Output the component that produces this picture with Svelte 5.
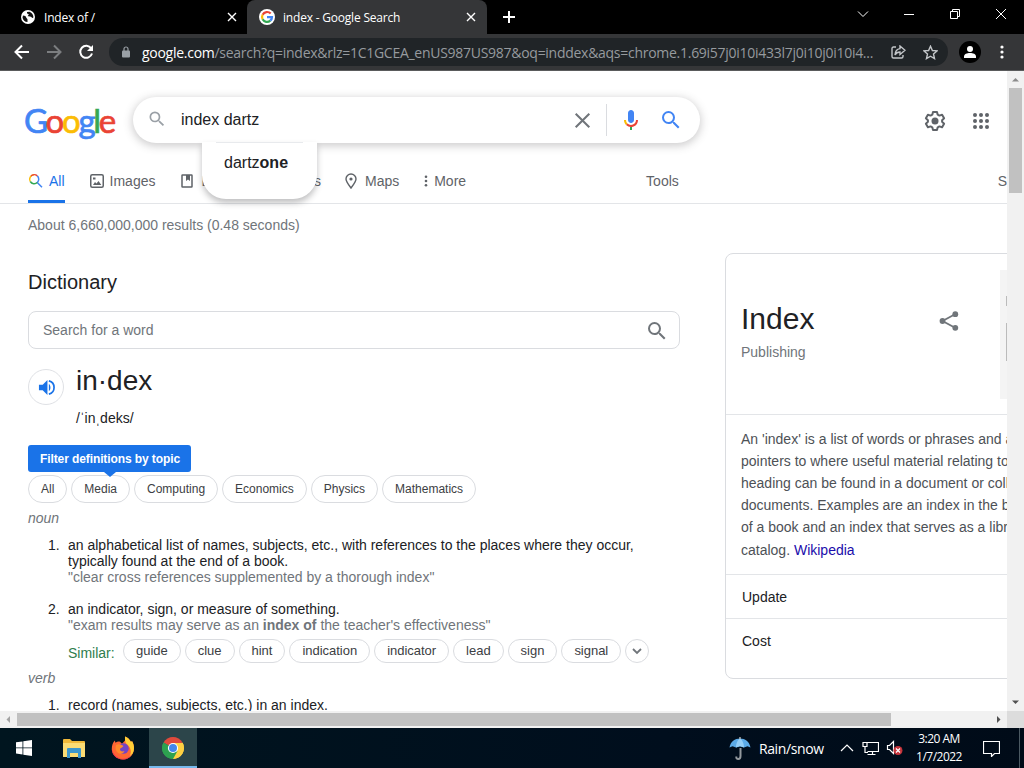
<script>
    let query = $state("index dartz");
    let word = $state("");

    const topics = [
        "All",
        "Media",
        "Computing",
        "Economics",
        "Physics",
        "Mathematics",
    ];
    const similar = [
        "guide",
        "clue",
        "hint",
        "indication",
        "indicator",
        "lead",
        "sign",
        "signal",
    ];
    const summary = [
        "An 'index' is a list of words or phrases and associated",
        "pointers to where useful material relating to that",
        "heading can be found in a document or collection of",
        "documents. Examples are an index in the back matter",
        "of a book and an index that serves as a library",
    ];
    const dots = [3, 9, 15];
</script>

{#snippet magnifier(size)}
    <svg width={size} height={size} viewBox="0 0 24 24" fill="currentColor">
        <path
            d="M15.5 14h-.79l-.28-.27A6.47 6.47 0 0 0 16 9.5 6.5 6.5 0 1 0 9.5 16c1.61 0 3.09-.59 4.23-1.57l.27.28v.79l5 4.99L20.49 19l-4.99-5zm-6 0C7.01 14 5 11.99 5 9.5S7.01 5 9.5 5 14 7.01 14 9.5 11.99 14 9.5 14z"
        />
    </svg>
{/snippet}

{#snippet cross(size, width)}
    <svg width={size} height={size} viewBox="0 0 10 10">
        <path
            d="M1 1l8 8M9 1l-8 8"
            stroke="currentColor"
            stroke-width={width}
        />
    </svg>
{/snippet}

<div class="desktop">
    <div class="tabstrip">
        <div class="tab">
            <svg width="14" height="14" viewBox="0 0 14 14">
                <circle cx="7" cy="7" r="7" fill="#fff" />
                <path
                    d="M2 5.5c2 .2 3 .8 3.2 2 .2 1 1.300 1 1.300 2v2.600C4 12 1.800 10 1.500 7.500zM6 2c-.2 1.500.5 2 1.600 2 .5 1.200-1 1.300-.8 2.300 1.500.3 3-.2 3.800 1 .3.800 1 1 1.800.3C12.500 5 11 2.500 8.500 1.700z"
                    fill="#111"
                />
            </svg>
            <span class="tab-title first-title">Index of /</span>
            <button class="tab-close" aria-label="Close tab"
                >{@render cross(10, 1.4)}</button
            >
        </div>
        <div class="tab active">
            <svg width="16" height="16" viewBox="0 0 16 16">
                <circle cx="8" cy="8" r="8" fill="#fff" />
                <g fill="none" stroke-width="2.200">
                    <path d="M11.700 4.600A5 5 0 0 0 3.600 5.700" stroke="#ea4335" />
                    <path d="M3.600 5.700a5 5 0 0 0 0 4.600" stroke="#fbbc05" />
                    <path d="M3.600 10.300a5 5 0 0 0 7.700 1.400" stroke="#34a853" />
                    <path d="M11.300 11.700A5 5 0 0 0 13 8.100H8" stroke="#4285f4" />
                </g>
            </svg>
            <span class="tab-title">index - Google Search</span>
            <button class="tab-close" aria-label="Close tab"
                >{@render cross(10, 1.4)}</button
            >
        </div>
        <button class="new-tab" aria-label="New tab">
            <svg width="12" height="12" viewBox="0 0 12 12"
                ><path d="M6 0v12M0 6h12" stroke="#fff" stroke-width="2" /></svg
            >
        </button>
        <div class="window-buttons">
            <svg width="46" height="28" viewBox="0 0 46 28"
                ><path d="M18 11.500l5 5 5-5" /></svg
            >
            <svg width="46" height="28" viewBox="0 0 46 28"
                ><path d="M18 14.500h10" /></svg
            >
            <svg width="46" height="28" viewBox="0 0 46 28"
                ><path d="M18.500 11.500h7v7h-7zM20.500 11.500v-2h7v7h-2" /></svg
            >
            <svg width="46" height="28" viewBox="0 0 46 28"
                ><path d="M18 9l10 10M28 9l-10 10" /></svg
            >
        </div>
    </div>

    <div class="toolbar">
        <svg class="nav" width="16" height="16" viewBox="0 0 16 16"
            ><path d="M15 8H2M8 1.500L1.500 8 8 14.500" stroke="#fff" /></svg
        >
        <svg class="nav" width="16" height="16" viewBox="0 0 16 16"
            ><path d="M1 8h13M8 1.500L14.500 8 8 14.500" stroke="#7c7e80" /></svg
        >
        <svg class="nav" width="16" height="16" viewBox="0 0 16 16">
            <path d="M13.200 4.400A6 6 0 1 0 14 9.500" stroke="#fff" />
            <path d="M15 1v6H9z" fill="#fff" />
        </svg>
        <div class="omnibox">
            <svg width="8" height="12" viewBox="0 0 8 12">
                <rect y="4.500" width="8" height="7" rx="1" fill="#9aa0a6" />
                <path
                    d="M2 5V3a2 2 0 0 1 4 0v2"
                    fill="none"
                    stroke="#9aa0a6"
                    stroke-width="1.200"
                />
            </svg>
            <span class="url"
                ><b>google.com</b
                >/search?q=index&amp;rlz=1C1GCEA_enUS987US987&amp;oq=inddex&amp;aqs=chrome.1.69i57j0i10i433l7j0i10j0i10i4...</span
            >
            <svg
                class="omni-icon"
                width="15"
                height="14"
                viewBox="0 0 15 14"
            >
                <path d="M5 2H2.500Q1 2 1 3.500v8Q1 13 2.500 13h8q1.500 0 1.500-1.500V10" />
                <path d="M9 1l5 4.300L9 9.500V7C6.500 7 5 8 4 10c.2-3.500 2-6 5-6.400z" />
            </svg>
            <svg
                class="omni-icon"
                width="15"
                height="15"
                viewBox="0 0 15 15"
                ><path
                    d="M7.500 1.200l1.900 4.300 4.600.4-3.500 3.100 1 4.600-4-2.400-4 2.400 1-4.600L1 5.900l4.600-.4z"
                /></svg
            >
        </div>
        <div class="avatar">
            <svg width="12" height="12" viewBox="0 0 12 12" fill="#fff"
                ><circle cx="6" cy="3" r="3" /><path
                    d="M0 12v-1.500C0 8 3 7 6 7s6 1 6 3.500V12z"
                /></svg
            >
        </div>
        <svg class="kebab" width="4" height="14" viewBox="0 0 4 14" fill="#fff">
            <circle cx="2" cy="2" r="1.600" /><circle cx="2" cy="7" r="1.600" />
            <circle cx="2" cy="12" r="1.600" />
        </svg>
    </div>

    <div class="viewport">
        <main class="page">
            <header class="search-header">
                <div class="logo">
                    <span class="blue">G</span><span class="red">o</span><span
                        class="yellow">o</span
                    ><span class="blue">g</span><span class="green">l</span><span
                        class="red">e</span
                    >
                </div>
                <div class="searchbox">
                    <span class="lens">{@render magnifier(20)}</span>
                    <input
                        type="text"
                        aria-label="Search"
                        bind:value={query}
                    />
                    <span class="clear">{@render cross(17, 1.2)}</span>
                    <span class="separator"></span>
                    <svg class="mic" width="24" height="24" viewBox="0 0 24 24">
                        <path
                            d="M12 15c1.660 0 3-1.310 3-2.970V5c0-1.660-1.340-3-3-3S9 3.340 9 5v7.030C9 13.690 10.340 15 12 15z"
                            fill="#4285f4"
                        />
                        <path d="M11 18.900h2V22h-2z" fill="#34a853" />
                        <path
                            d="M7 12H5c0 1.930.78 3.680 2.040 4.950l1.410-1.410A5 5 0 0 1 7 12z"
                            fill="#fbbc05"
                        />
                        <path
                            d="M12 17c-1.380 0-2.640-.56-3.540-1.470l-1.410 1.410A7 7 0 0 0 19 12h-2a5 5 0 0 1-5 5z"
                            fill="#ea4335"
                        />
                    </svg>
                    <span class="go">{@render magnifier(24)}</span>
                    <div class="suggestions">
                        <div class="suggestion">dartz<b>one</b></div>
                    </div>
                </div>
                <svg class="gear" width="22" height="22" viewBox="1 1 22 22">
                    <path
                        d="M10 3h4l.7 2.700 1.700.9 2.700-.8 2 3.500-2 1.900v1.600l2 1.900-2 3.500-2.700-.8-1.700.9L14 21h-4l-.7-2.700-1.700-.9-2.700.8-2-3.500 2-1.900v-1.600l-2-1.900 2-3.500 2.700.8 1.700-.9z"
                        fill="none"
                        stroke="#5f6368"
                        stroke-width="2"
                        stroke-linejoin="round"
                    />
                    <circle cx="12" cy="12" r="3.500" fill="#5f6368" />
                </svg>
                <svg width="18" height="18" viewBox="0 0 18 18" fill="#5f6368">
                    {#each dots as cy}
                        {#each dots as cx}
                            <circle {cx} {cy} r="2" />
                        {/each}
                    {/each}
                </svg>
            </header>

            <nav class="modes">
                <span class="mode selected">
                    <svg width="16" height="16" viewBox="0 0 16 16" fill="none">
                        <path d="M2.200 8.500A4.500 4.500 0 0 1 6 1.800" stroke="#fbbc05" stroke-width="1.500" />
                        <path d="M3 3a4.500 4.500 0 0 1 6.300-.1" stroke="#ea4335" stroke-width="1.500" />
                        <path d="M9.300 2.900a4.500 4.500 0 0 1 0 6.600l4.700 4.700" stroke="#4285f4" stroke-width="1.500" />
                        <path d="M9.300 9.500a4.500 4.500 0 0 1-7-1" stroke="#34a853" stroke-width="1.500" />
                    </svg>
                    All
                </span>
                <span class="mode images">
                    <svg width="14" height="14" viewBox="0 0 14 14" fill="none">
                        <rect
                            x=".75"
                            y=".75"
                            width="12.500"
                            height="12.500"
                            rx="1.500"
                            stroke="currentColor"
                            stroke-width="1.500"
                        />
                        <path
                            d="M3 11l2-3 1.500 1.500L8.500 7l2.800 4zM3 3.500h2.500v2H3z"
                            fill="currentColor"
                        />
                    </svg>
                    Images
                </span>
                <span class="mode books">
                    <svg width="12" height="14" viewBox="0 0 12 14" fill="none">
                        <rect
                            x="1"
                            y="1"
                            width="10"
                            height="12"
                            rx=".5"
                            stroke="currentColor"
                            stroke-width="1.500"
                        />
                        <path d="M5 1h4v6L7 5.500 5 7z" fill="currentColor" />
                    </svg>
                    Books
                </span>
                <span class="mode videos">Videos</span>
                <span class="mode maps">
                    <svg width="12" height="16" viewBox="0 0 12 16" fill="none">
                        <path
                            d="M6 15C3 11 1 8.500 1 6a5 5 0 0 1 10 0c0 2.500-2 5-5 9z"
                            stroke="currentColor"
                            stroke-width="1.400"
                        />
                        <circle cx="6" cy="6" r="1.600" fill="currentColor" />
                    </svg>
                    Maps
                </span>
                <span class="mode more">
                    <svg width="4" height="12" viewBox="0 0 4 12" fill="currentColor">
                        <circle cx="2" cy="1.800" r="1.300" /><circle
                            cx="2"
                            cy="6"
                            r="1.300"
                        /><circle cx="2" cy="10.200" r="1.300" />
                    </svg>
                    More
                </span>
                <span class="mode tools">Tools</span>
                <span class="mode safe">SafeSearch</span>
            </nav>

            <div class="results">
                <section class="dictionary">
                    <p class="stats">
                        About 6,660,000,000 results (0.48 seconds)
                    </p>
                    <h2>Dictionary</h2>
                    <div class="word-search">
                        <input
                            type="text"
                            placeholder="Search for a word"
                            bind:value={word}
                        />
                        {@render magnifier(24)}
                    </div>
                    <div class="headword">
                        <button class="audio" aria-label="Listen">
                            <svg width="17" height="17" viewBox="0 0 18 18">
                                <path d="M1 6v6h4l5 5V1L5 6z" fill="#1a73e8" />
                                <path
                                    d="M11.500 5.200c2.200 1.300 2.200 6.300 0 7.600z"
                                    fill="#1a73e8"
                                />
                                <path
                                    d="M11.500 2a7.200 7.200 0 0 1 0 14"
                                    fill="none"
                                    stroke="#1a73e8"
                                    stroke-width="1.800"
                                />
                            </svg>
                        </button>
                        <div>
                            <div class="word">in·dex</div>
                            <div class="phonetic">/ˈinˌdeks/</div>
                        </div>
                    </div>
                    <div class="tooltip">Filter definitions by topic</div>
                    <div class="topics">
                        {#each topics as topic}
                            <button class="chip">{topic}</button>
                        {/each}
                    </div>
                    <div class="pos">noun</div>
                    <ol>
                        <li>
                            an alphabetical list of names, subjects, etc., with
                            references to the places where they occur,<br
                            />typically found at the end of a book.
                            <div class="usage">
                                "clear cross references supplemented by a
                                thorough index"
                            </div>
                        </li>
                        <li>
                            an indicator, sign, or measure of something.
                            <div class="usage">
                                "exam results may serve as an <b>index of</b> the
                                teacher's effectiveness"
                            </div>
                            <div class="similar">
                                <span class="similar-label">Similar:</span>
                                {#each similar as s}
                                    <button class="chip small">{s}</button>
                                {/each}
                                <button class="expand" aria-label="Show more">
                                    <svg width="10" height="7" viewBox="0 0 10 7"
                                        ><path
                                            d="M1 1l4 4 4-4"
                                            fill="none"
                                            stroke="#70757a"
                                            stroke-width="1.800"
                                        /></svg
                                    >
                                </button>
                            </div>
                        </li>
                    </ol>
                    <div class="pos verb">verb</div>
                    <ol>
                        <li>record (names, subjects, etc.) in an index.</li>
                    </ol>
                </section>

                <aside class="panel">
                    <div class="panel-head">
                        <div class="panel-title">
                            <h1>Index</h1>
                            <div class="subtitle">Publishing</div>
                        </div>
                        <svg class="share" width="20" height="20" viewBox="0 0 20 20">
                            <path
                                d="M16.500 3L3.500 10l13 7"
                                fill="none"
                                stroke="#70757a"
                                stroke-width="1.800"
                            />
                            <g fill="#70757a">
                                <circle cx="16.300" cy="3.200" r="2.900" />
                                <circle cx="3.500" cy="10" r="2.900" />
                                <circle cx="16.300" cy="16.800" r="2.900" />
                            </g>
                        </svg>
                        <div class="thumb"><span></span><span></span></div>
                    </div>
                    <div class="summary">
                        {#each summary as line}
                            <div>{line}</div>
                        {/each}
                        <div class="last-line">
                            catalog. <span class="link">Wikipedia</span>
                        </div>
                    </div>
                    <div class="row">Update</div>
                    <div class="row cost">Cost</div>
                </aside>
            </div>
        </main>
        <div class="vscroll">
            <svg width="17" height="17" viewBox="0 0 17 17"
                ><path d="M5 10.500L8.500 7l3.500 3.500z" fill="#8b8b8b" /></svg
            >
            <div class="vthumb"></div>
            <svg class="down" width="17" height="17" viewBox="0 0 17 17"
                ><path d="M5 6.500h7L8.500 10z" fill="#505050" /></svg
            >
        </div>
        <div class="hscroll">
            <svg width="17" height="17" viewBox="0 0 17 17"
                ><path d="M10 5v7L6.500 8.500z" fill="#a3a3a3" /></svg
            >
            <div class="hthumb"></div>
            <svg class="right" width="17" height="17" viewBox="0 0 17 17"
                ><path d="M7 5v7l3.500-3.500z" fill="#505050" /></svg
            >
        </div>
        <div class="corner"></div>
    </div>

    <footer class="taskbar">
        <div class="task">
            <svg width="16" height="16" viewBox="0 0 16 16" fill="#fff"
                ><path
                    d="M0 2.300l6.500-.9v6.100H0zM7.300 1.300L16 0v7.500H7.300zM0 8.300h6.500v6.200L0 13.600zM7.300 8.300H16V16l-8.700-1.200z"
                /></svg
            >
        </div>
        <div class="task explorer">
            <svg width="22" height="19" viewBox="0 0 22 19">
                <path d="M0 1q0-1 1-1h6l2 2h12q1 0 1 1v15H0z" fill="#f0b93a" />
                <path d="M0 4h22v13q0 1-1 1H1q-1 0-1-1z" fill="#fbdc74" />
                <path d="M4 10q0-1 1-1h12q1 0 1 1v9h-3v-5H7v5H4z" fill="#3c96cc" />
            </svg>
        </div>
        <div class="task">
            <svg width="24" height="24" viewBox="0 0 24 24">
                <path
                    d="M12 23.500C5.500 23.500.8 18.800.8 12.800c0-3.300.9-6 3-8.300l.7 2.200c1.500-1.200 3-1.500 4.500-1l2 2 3-3.200c.2-1.500 0-3 0-4 3 1.200 5 3.300 6 5.500l1-1c1.300 2.200 2 4.700 2 7.300 0 6.200-4.500 11.200-11 11.200z"
                    fill="#ff6633"
                />
                <path
                    d="M14 .5c3 1.200 5 3.300 6 5.500l1-1c1.300 2.200 2 4.700 2 7.300 0 4-2 7-5 9 3-4 2-9-1-12-2-2-3.300-3-3-8.800z"
                    fill="#ffcf37"
                />
                <path
                    d="M.8 12.800c1 5 4 8 8.200 9.700 6 1 10-1 12-5-1.500 4-5 6-9 6C5.500 23.500.8 18.800.8 12.800z"
                    fill="#ee2e55"
                />
                <circle cx="12.500" cy="12.500" r="5.200" fill="#7444c4" />
                <path
                    d="M5 9c2-1.500 5-.8 7.500 1-1 2-3 1.500-3.500 3-.3 2 2 3 4.500 2-1 2.500-4 3.500-6.500 2C4.500 15 4 12 5 9z"
                    fill="#ff8a2b"
                />
            </svg>
        </div>
        <div class="task current">
            <svg width="22" height="22" viewBox="0 0 22 22">
                <path d="M11 11L1.500 5.500a11 11 0 0 1 19 0z" fill="#e04a3c" />
                <path d="M11 11l9.500-5.500A11 11 0 0 1 11 22z" fill="#ffd042" />
                <path d="M11 11v11A11 11 0 0 1 1.500 5.500z" fill="#2da150" />
                <path d="M11 6h9.800a11 11 0 0 1-9.800 16l4.500-8.500z" fill="#ffd042" />
                <path d="M6.500 13.500L1.500 5.500A11 11 0 0 0 11 22l4.500-8z" fill="#2da150" />
                <circle cx="11" cy="11" r="5.100" fill="#fff" />
                <circle cx="11" cy="11" r="4" fill="#4387ec" />
            </svg>
        </div>
        <div class="tray">
            <svg width="22" height="24" viewBox="0 0 22 24">
                <path
                    d="M11.500 12v8q0 3-2.200 3T7.300 20.500"
                    fill="none"
                    stroke="#93999e"
                    stroke-width="2"
                />
                <path
                    d="M.5 11.500C1.500 5.500 6 2.500 11 2.500s9.500 3 10.500 9l-3-1.200-3.500 1.200-4-1.200-4 1.200-3.500-1.200z"
                    fill="#5cabe8"
                />
                <path
                    d="M7 11.500C7 7 9 3.500 11 2.500c2 1 4 4.500 4 9l-4-1.200z"
                    fill="#94cef7"
                />
                <path d="M11 1v2" stroke="#aaa" stroke-width="1.500" />
            </svg>
            <span class="weather">Rain/snow</span>
            <svg class="line caret" width="14" height="8" viewBox="0 0 14 8"
                ><path d="M1 7l6-6 6 6" /></svg
            >
            <svg class="line network" width="17" height="15" viewBox="0 0 17 15"
                ><path
                    d="M5.500 1.500h11v9h-11M10.500 10.500v3M5.500 13.500h8M1 1.500h4v4H1zM3 5.500v6h3"
                /></svg
            >
            <svg class="line sound" width="18" height="16" viewBox="0 0 18 16">
                <path d="M1.500 5.500h2l4-4v12l-4-4h-2z" />
                <circle cx="12" cy="10.500" r="4.500" fill="#c6343b" stroke="none" />
                <path d="M10 8.500l4 4M14 8.500l-4 4" />
            </svg>
            <div class="clock">
                <div>3:20 AM</div>
                <div>1/7/2022</div>
            </div>
            <svg class="line notes" width="17" height="17" viewBox="0 0 17 17"
                ><path d="M.5 1.500h16v12h-5l-3 3v-3h-8z" /></svg
            >
        </div>
        <div class="peek"></div>
    </footer>
</div>

<style>
    :global(body) {
        margin: 0;
        overflow: hidden;
    }

    .desktop {
        width: 1024px;
        height: 768px;
        display: flex;
        flex-direction: column;
        overflow: hidden;
        background: #fff;
        color: #202124;
        font-family: "Liberation Sans", Arial, sans-serif;
        font-size: 14px;
        white-space: nowrap;
    }

    svg {
        display: block;
        flex: none;
    }

    button {
        border: none;
        padding: 0;
        background: none;
        font-family: inherit;
        color: inherit;
    }

    input {
        border: none;
        outline: none;
        padding: 0;
        background: none;
        font-family: inherit;
        color: inherit;
    }

    .tabstrip {
        height: 34px;
        flex: none;
        display: flex;
        background: #000;
        color: #fff;
        font-family: "Open Sans", "Noto Sans", sans-serif;
        font-size: 12px;
    }

    .tab {
        width: 247px;
        height: 34px;
        box-sizing: border-box;
        display: flex;
        align-items: center;
        padding: 0 10px 0 21px;
    }

    .tab.active {
        width: 240px;
        padding: 0 11px 0 12px;
        background: #353638;
        border-radius: 8px 8px 0 0;
    }

    .tab-title {
        margin-left: 8px;
        flex: 1;
        letter-spacing: -0.2px;
    }

    .first-title {
        margin-left: 9px;
    }

    .tab-close {
        display: flex;
    }

    .new-tab {
        margin-left: 16px;
        display: flex;
        align-items: center;
    }

    .window-buttons {
        margin-left: auto;
        display: flex;
    }

    .window-buttons path {
        fill: none;
        stroke: #fff;
    }

    .toolbar {
        height: 37px;
        flex: none;
        box-sizing: border-box;
        display: flex;
        align-items: center;
        padding: 0 20px 0 14px;
        background: #353638;
        border-bottom: 1px solid #5a5b5c;
    }

    .nav {
        margin-right: 16px;
        fill: none;
        stroke-width: 2;
    }

    .omnibox {
        width: 839px;
        height: 28px;
        margin-left: -1px;
        box-sizing: border-box;
        display: flex;
        align-items: center;
        padding: 0 10px 0 13px;
        border-radius: 14px;
        background: #202427;
        color: #969a9e;
        font-family: "Open Sans", "Noto Sans", sans-serif;
        font-size: 14px;
    }

    .url {
        flex: 1;
        margin-left: 12px;
        letter-spacing: -0.275px;
    }

    .url b {
        color: #fff;
        font-weight: 400;
    }

    .omni-icon {
        margin-left: 17px;
        fill: none;
        stroke: #c3c6c9;
        stroke-width: 1.4;
    }

    .avatar {
        width: 22px;
        height: 22px;
        margin-left: 11px;
        border-radius: 50%;
        display: flex;
        align-items: center;
        justify-content: center;
        background: #000;
    }

    .kebab {
        margin-left: 19px;
    }

    .viewport {
        height: 657px;
        flex: none;
        display: grid;
        grid-template-columns: 1007px 17px;
        grid-template-rows: 640px 17px;
    }

    .page {
        overflow: hidden;
    }

    .search-header {
        display: flex;
        align-items: center;
        padding: 26px 0 0 24px;
        height: 46px;
    }

    .logo {
        width: 109px;
        font-family: Lato, "Open Sans", sans-serif;
        font-size: 33px;
        line-height: 44px;
        letter-spacing: -2.3px;
        -webkit-text-stroke: 0.7px;
    }

    .blue {
        color: #4285f4;
    }

    .red {
        color: #ea4335;
    }

    .yellow {
        color: #fbbc05;
    }

    .green {
        color: #34a853;
    }

    .searchbox {
        position: relative;
        width: 567px;
        height: 46px;
        display: flex;
        align-items: center;
        border-radius: 23px;
        background: #fff;
        box-shadow: 0 2px 8px 1px rgba(64, 60, 67, 0.26);
    }

    .lens {
        margin: -2px 0 0 14px;
        color: #9aa0a6;
    }

    .searchbox input {
        width: 380px;
        margin-left: 14px;
        font-size: 16px;
    }

    .clear {
        margin-left: 13px;
        color: #70757a;
    }

    .separator {
        width: 1px;
        height: 32px;
        margin-left: 15px;
        background: #dadce0;
    }

    .mic {
        margin-left: 12px;
    }

    .go {
        margin-left: 16px;
        color: #4285f4;
    }

    .suggestions {
        position: absolute;
        left: 69px;
        top: 45px;
        z-index: 2;
        width: 115px;
        height: 57px;
        border-radius: 0 0 24px 24px;
        background: #fff;
        box-shadow: 0 4px 6px rgba(32, 33, 36, 0.28);
    }

    .suggestion {
        margin: 0 14px;
        padding: 10px 8px;
        border-top: 1px solid #e8eaed;
        font-size: 16px;
        line-height: 20px;
    }

    .gear {
        margin: 2px 27px 0 224px;
    }

    .gear + svg {
        margin-top: 2px;
        margin-left: -1px;
    }

    .modes {
        height: 61px;
        box-sizing: border-box;
        display: flex;
        align-items: flex-end;
        padding-left: 28px;
        border-bottom: 1px solid #e3e5e8;
        color: #5f6368;
    }

    .mode {
        height: 41px;
        display: flex;
        align-items: center;
        gap: 5px;
        box-sizing: border-box;
        border-bottom: 3px solid transparent;
    }

    .selected {
        width: 37px;
        color: #1a73e8;
        border-color: #1a73e8;
    }

    .images {
        margin-left: 25px;
        gap: 6px;
    }

    .books {
        margin-left: 26px;
        gap: 8px;
    }

    .videos {
        width: 45px;
        margin-left: 38px;
    }

    .maps {
        margin-left: 24px;
        gap: 8px;
    }

    .more {
        margin-left: 25px;
        gap: 6px;
    }

    .tools {
        margin-left: 180px;
    }

    .safe {
        margin-left: 319px;
    }

    .results {
        display: flex;
        align-items: flex-start;
    }

    .dictionary {
        width: 652px;
        flex: none;
        padding-left: 28px;
    }

    .stats {
        margin: 12px 0 0;
        line-height: 18px;
        color: #70757a;
    }

    h2 {
        margin: 35px 0 0;
        font-size: 20px;
        font-weight: 400;
        line-height: 26px;
    }

    .word-search {
        height: 38px;
        box-sizing: border-box;
        margin-top: 16px;
        display: flex;
        align-items: center;
        justify-content: space-between;
        padding: 0 10px 0 14px;
        border: 1px solid #dadce0;
        border-radius: 8px;
        color: #70757a;
    }

    .word-search :global(svg) {
        margin-top: 2px;
    }

    .word-search input {
        width: 400px;
        font-size: 14px;
    }

    .word-search input::placeholder {
        color: #70757a;
        opacity: 1;
    }

    .headword {
        display: flex;
        gap: 12px;
        height: 96px;
    }

    .audio {
        width: 36px;
        height: 36px;
        margin-top: 20px;
        box-sizing: border-box;
        display: flex;
        align-items: center;
        justify-content: center;
        border: 1px solid #dfe1e5;
        border-radius: 50%;
    }

    .word {
        margin-top: 14px;
        font-size: 28px;
        line-height: 36px;
    }

    .phonetic {
        margin-top: 10px;
        line-height: 18px;
    }

    .tooltip {
        position: relative;
        width: 163px;
        height: 27px;
        box-sizing: border-box;
        padding-left: 12px;
        border-radius: 3px;
        background: #1a73e8;
        color: #fff;
        font-size: 12px;
        font-weight: 700;
        line-height: 28px;
        letter-spacing: -0.1px;
    }

    .tooltip::after {
        content: "";
        position: absolute;
        left: 76px;
        top: 27px;
        border: 6px solid transparent;
        border-top: 5px solid #1a73e8;
        border-bottom: none;
    }

    .topics {
        display: flex;
        gap: 4px;
        margin-top: 3px;
    }

    .chip {
        height: 28px;
        padding: 0 12px;
        border: 1px solid #dadce0;
        border-radius: 14px;
        color: #3c4043;
        font-size: 12px;
    }

    .chip.small {
        height: 24px;
        padding-bottom: 1px;
        font-size: 13px;
        letter-spacing: -0.02px;
    }

    .pos {
        margin-top: 7px;
        line-height: 16px;
        font-style: italic;
        color: #70757a;
    }

    ol {
        margin: 11px 0 0;
        padding-left: 40px;
        line-height: 16px;
        list-style: none;
        counter-reset: sense;
    }

    li {
        counter-increment: sense;
    }

    li::before {
        content: counter(sense) ".";
        display: inline-block;
        width: 20px;
        margin-left: -20px;
    }

    li + li {
        margin-top: 16px;
    }

    .usage {
        color: #70757a;
    }

    .similar {
        display: flex;
        align-items: center;
        gap: 4px;
        margin-top: 6px;
    }

    .similar-label {
        width: 51px;
        margin-top: 4px;
        color: #2f7d4d;
    }

    .expand {
        width: 24px;
        height: 24px;
        box-sizing: border-box;
        display: flex;
        align-items: center;
        justify-content: center;
        border: 1px solid #dadce0;
        border-radius: 50%;
    }

    .panel {
        width: 370px;
        height: 426px;
        flex: none;
        box-sizing: border-box;
        margin: 49px 0 0 45px;
        border: 1px solid #dadce0;
        border-radius: 8px;
    }

    .panel-head {
        height: 161px;
        box-sizing: border-box;
        display: flex;
        padding-left: 15px;
        border-bottom: 1px solid #e3e5e8;
    }

    .panel-title {
        width: 198px;
        padding-top: 46px;
    }

    h1 {
        margin: 0;
        font-size: 30px;
        font-weight: 400;
        line-height: 38px;
    }

    .subtitle {
        margin-top: 5px;
        line-height: 18px;
        color: #70757a;
    }

    .panel-title {
        flex: none;
    }

    .share {
        margin-top: 57px;
    }

    .thumb {
        width: 100px;
        height: 129px;
        flex: none;
        margin: 16px 0 0 41px;
        box-sizing: border-box;
        display: flex;
        flex-direction: column;
        justify-content: space-around;
        padding: 18px 0 30px 6px;
        background: #f4f4f4;
    }

    .thumb span {
        width: 1px;
        height: 38px;
        background: #bbb;
    }

    .thumb span:first-child {
        height: 10px;
    }

    .summary {
        height: 160px;
        box-sizing: border-box;
        padding: 13px 0 0 15px;
        border-bottom: 1px solid #e3e5e8;
        color: #4d5156;
        line-height: 22px;
    }

    .last-line {
        margin-top: 1px;
    }

    .link {
        color: #1a0dab;
    }

    .row {
        height: 44px;
        box-sizing: border-box;
        padding-left: 16px;
        border-bottom: 1px solid #e3e5e8;
        line-height: 45px;
    }

    .cost {
        border-bottom: none;
    }

    .vscroll {
        display: flex;
        flex-direction: column;
        background: #f1f1f1;
    }

    .vthumb {
        width: 13px;
        height: 105px;
        margin-left: 2px;
        background: #c1c1c1;
    }

    .down {
        margin-top: auto;
    }

    .hscroll {
        display: flex;
        align-items: center;
        background: #f1f1f1;
    }

    .hthumb {
        width: 874px;
        height: 13px;
        background: #c1c1c1;
    }

    .right {
        margin-left: auto;
    }

    .corner {
        background: #dcdcdc;
    }

    .taskbar {
        height: 40px;
        flex: none;
        display: flex;
        background: linear-gradient(90deg, #00151f, #000e1d 65%, #000b18);
        color: #fff;
        font-family: "Open Sans", "Noto Sans", sans-serif;
    }

    .task {
        width: 48px;
        display: flex;
        align-items: center;
        justify-content: center;
    }

    .task.explorer {
        margin: 0 1px 0 2px;
    }

    .current {
        box-sizing: border-box;
        margin-left: 2px;
        padding-top: 2px;
        background: #2c454a;
        border-bottom: 2px solid #76b9ed;
    }

    .tray {
        margin-left: auto;
        display: flex;
        align-items: center;
    }

    .weather {
        width: 66px;
        margin-left: 8px;
        font-size: 14px;
        letter-spacing: -0.4px;
    }

    .line {
        fill: none;
        stroke: #fff;
        stroke-width: 1.2;
    }

    .caret {
        margin-left: 15px;
    }

    .network {
        margin-left: 8px;
    }

    .sound {
        margin-left: 7px;
    }

    .clock {
        width: 60px;
        margin-left: 5px;
        font-size: 12px;
        line-height: 18px;
        letter-spacing: -0.5px;
        text-align: center;
    }

    .notes {
        margin-left: 14px;
    }

    .peek {
        width: 4px;
        margin-left: 19px;
        border-left: 1px solid #4b5962;
    }
</style>
